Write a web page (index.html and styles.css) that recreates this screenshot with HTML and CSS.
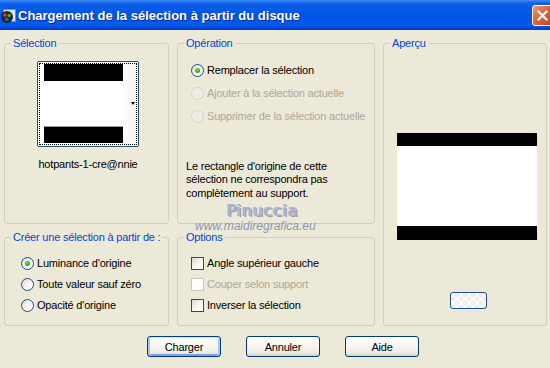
FILE: index.html
```html
<!DOCTYPE html>
<html lang="fr">
<head>
    <meta charset="UTF-8">
    <title>Chargement de la sélection à partir du disque</title>
    <link rel="stylesheet" href="styles.css">
</head>
<body>
    <div class="window">
        <div class="titlebar">
            <svg class="title-icon" width="16" height="16" viewBox="0 0 16 16">
                <rect x="3.5" y="1.5" width="12" height="12" fill="#dfe4ee" stroke="#7d8aa3"/>
                <circle cx="7" cy="9" r="6" fill="#262626"/>
                <circle cx="5" cy="7" r="1.7" fill="#e23a3a"/>
                <circle cx="9.2" cy="7.4" r="1.7" fill="#2fb84a"/>
                <circle cx="6.8" cy="11.2" r="1.7" fill="#3a5ee8"/>
            </svg>
            <span class="title-text">Chargement de la sélection à partir du disque</span>
            <span class="close-btn">
                <svg width="19" height="19" viewBox="0 0 19 19">
                    <path d="M5.5 5.5 L13.5 13.5 M13.5 5.5 L5.5 13.5" stroke="#fff" stroke-width="2.2" stroke-linecap="square"/>
                </svg>
            </span>
        </div>

        <div class="groups">
            <fieldset class="group group-selection">
                <legend>Sélection</legend>
                <div class="thumb-picker">
                    <div class="thumb-focus">
                        <div class="thumb-image"></div>
                        <span class="thumb-arrow"></span>
                    </div>
                </div>
                <div class="thumb-name">hotpants-1-cre@nnie</div>
            </fieldset>

            <fieldset class="group group-operation">
                <legend>Opération</legend>
                <ul class="choices wide">
                    <li class="choice"><span class="radio checked"></span>Remplacer la sélection</li>
                    <li class="choice disabled"><span class="radio"></span>Ajouter à la sélection actuelle</li>
                    <li class="choice disabled"><span class="radio"></span>Supprimer de la sélection actuelle</li>
                </ul>
                <p class="note">Le rectangle d'origine de cette<br>sélection ne correspondra pas<br>complètement au support.</p>
            </fieldset>

            <fieldset class="group group-preview">
                <legend>Aperçu</legend>
                <div class="preview-image"></div>
                <span class="preview-btn"></span>
            </fieldset>

            <fieldset class="group group-source">
                <legend>Créer une sélection à partir de :</legend>
                <ul class="choices">
                    <li class="choice"><span class="radio checked"></span>Luminance d'origine</li>
                    <li class="choice"><span class="radio"></span>Toute valeur sauf zéro</li>
                    <li class="choice"><span class="radio"></span>Opacité d'origine</li>
                </ul>
            </fieldset>

            <fieldset class="group group-options">
                <legend>Options</legend>
                <ul class="choices">
                    <li class="choice"><span class="checkbox"></span>Angle supérieur gauche</li>
                    <li class="choice disabled"><span class="checkbox"></span>Couper selon support</li>
                    <li class="choice"><span class="checkbox"></span>Inverser la sélection</li>
                </ul>
            </fieldset>
        </div>

        <div class="buttons">
            <button class="btn btn-default">Charger</button>
            <button class="btn">Annuler</button>
            <button class="btn">Aide</button>
        </div>

        <div class="watermark">
            <div class="wm-name">Pinuccia</div>
            <div class="wm-site">www.maidiregrafica.eu</div>
        </div>
    </div>
</body>
</html>
```

FILE: styles.css
```css
* {
    box-sizing: border-box;
}

body {
    margin: 0;
    background: #ECE9D8;
    font-family: "Liberation Sans", Arial, sans-serif;
    font-size: 11px;
    letter-spacing: -0.2px;
    color: #000;
}

.window {
    position: relative;
    width: 550px;
    height: 368px;
    overflow: hidden;
}

/* title bar */
.titlebar {
    height: 30px;
    display: flex;
    align-items: center;
    background: linear-gradient(to bottom, #3F8CF3 0%, #0B5FE8 12%, #0055E5 45%, #005AEC 82%, #0049D0 94%, #003BB5 100%);
    color: #fff;
}

.title-icon {
    flex: none;
    margin: 1px 2px 0 0;
}

.title-text {
    flex: 1;
    padding-top: 1px;
    font-size: 13px;
    font-weight: bold;
    letter-spacing: 0;
    white-space: nowrap;
    text-shadow: 1px 1px 0 #0A2A8C;
}

.close-btn {
    flex: none;
    width: 21px;
    height: 21px;
    margin-right: -3px;
    border: 1px solid #fff;
    border-radius: 3px;
    background: linear-gradient(135deg, #EC9B7E 0%, #E2683F 40%, #C8401A 100%);
}

.close-btn svg {
    display: block;
}

/* group boxes */
.groups {
    display: grid;
    grid-template-columns: 165px 198px 164px;
    grid-template-rows: 187px 95px;
    column-gap: 8px;
    row-gap: 7px;
    padding: 7px 0 0 4px;
}

.group {
    margin: 0;
    padding: 0;
    min-width: 0;
    border: 1px solid #D0D0BF;
    border-radius: 3px;
}

.group legend {
    margin-left: 6px;
    padding: 0 2px;
    color: #0046D5;
    line-height: 12px;
}

.group-selection { grid-column: 1; grid-row: 1; }
.group-operation { grid-column: 2; grid-row: 1; }
.group-preview { grid-column: 3; grid-row: 1 / 3; }
.group-source { grid-column: 1; grid-row: 2; }
.group-options { grid-column: 2; grid-row: 2; }

/* selection thumbnail */
.thumb-picker {
    width: 102px;
    height: 86px;
    margin: 12px 0 0 32px;
    padding: 1px;
    border: 1px solid #1C5180;
    border-radius: 2px;
    background: #fff;
}

.thumb-focus {
    display: flex;
    align-items: center;
    height: 100%;
    border: 1px dotted #000;
    background: linear-gradient(to right, #fff 85%, #F1F1EE 100%);
}

.thumb-image {
    align-self: flex-start;
    width: 79px;
    height: 79px;
    margin-left: 4px;
    border-top: 17px solid #000;
    border-bottom: 16px solid #000;
    background: #fff;
    box-shadow: inset 0 -1px 0 #9a9a9a;
}

.thumb-arrow {
    margin: 0 1px 1px auto;
    border-left: 2.5px solid transparent;
    border-right: 2.5px solid transparent;
    border-top: 3px solid #000;
}

.thumb-name {
    margin-top: 11px;
    padding-left: 3px;
    text-align: center;
    line-height: 13px;
}

/* radios and checkboxes */
.choices {
    list-style: none;
    margin: 9.5px 0 0 16px;
    padding: 0;
}

.group-operation .choices,
.group-options .choices {
    margin-left: 13px;
}

.choice {
    display: flex;
    align-items: center;
    height: 21px;
    white-space: nowrap;
}

.choices.wide .choice {
    height: 23px;
}

.choice.disabled {
    color: #ACA899;
}

.radio,
.checkbox {
    flex: none;
    display: flex;
    align-items: center;
    justify-content: center;
    width: 13px;
    height: 13px;
    margin-right: 3px;
    border: 1px solid #1C5180;
    background: linear-gradient(135deg, #DCD7CB 0%, #F3F2EC 45%, #fff 85%);
}

.radio {
    border-radius: 50%;
}

.radio.checked::after {
    content: "";
    width: 5px;
    height: 5px;
    border-radius: 50%;
    background: radial-gradient(circle at 40% 35%, #7BE07B 0%, #2BB02B 55%, #1A8A1A 100%);
}

.disabled .radio {
    border-color: #D6D3C6;
    background: #EFEDE3;
}

.disabled .checkbox {
    border-color: #CAC8BB;
    background: #fff;
}

.note {
    margin: 32px 0 0 8px;
    line-height: 13.5px;
}

/* preview */
.preview-image {
    width: 140px;
    height: 107px;
    margin: 84px 0 0 13px;
    border-top: 13px solid #000;
    border-bottom: 14px solid #000;
    background: #fff;
}

.preview-btn {
    display: block;
    width: 37px;
    height: 17px;
    margin: 52px 0 0 66px;
    border: 1px solid #1C5180;
    border-radius: 3px;
    background-color: #F8F8F6;
    background-image: repeating-conic-gradient(#ECECEA 0% 25%, #FCFCFB 0% 50%);
    background-size: 8px 8px;
}

/* dialog buttons */
.buttons {
    display: flex;
    gap: 25px;
    margin-top: 10px;
    padding-left: 147px;
}

.btn {
    width: 74px;
    height: 21px;
    padding: 0;
    border: 1px solid #003C74;
    border-radius: 3px;
    background: linear-gradient(#FFFFFF 0%, #F7F6F2 45%, #ECEBE6 82%, #D6D0C5 100%);
    font: inherit;
    letter-spacing: inherit;
    color: #000;
}

.btn-default {
    box-shadow: inset 0 1px 0 #CEE7FF, inset 2px 0 0 #A7C4F3, inset -2px 0 0 #A7C4F3, inset 0 -2px 0 #7FA0E6;
}

/* watermark stamped over the picture */
.watermark {
    position: absolute;
    left: 195px;
    top: 203px;
    pointer-events: none;
}

.wm-name {
    margin-left: 32px;
    font-family: "DejaVu Sans", sans-serif;
    font-size: 16px;
    line-height: 15px;
    letter-spacing: 0.7px;
    color: #B4B8CC;
    text-shadow: 1px 1px 0 #9097B0, -1px 0 0 #A2A7BD;
}

.wm-site {
    margin-top: 1.5px;
    font-size: 12px;
    font-style: italic;
    line-height: 12px;
    letter-spacing: 0;
    color: #9097AE;
}
```
